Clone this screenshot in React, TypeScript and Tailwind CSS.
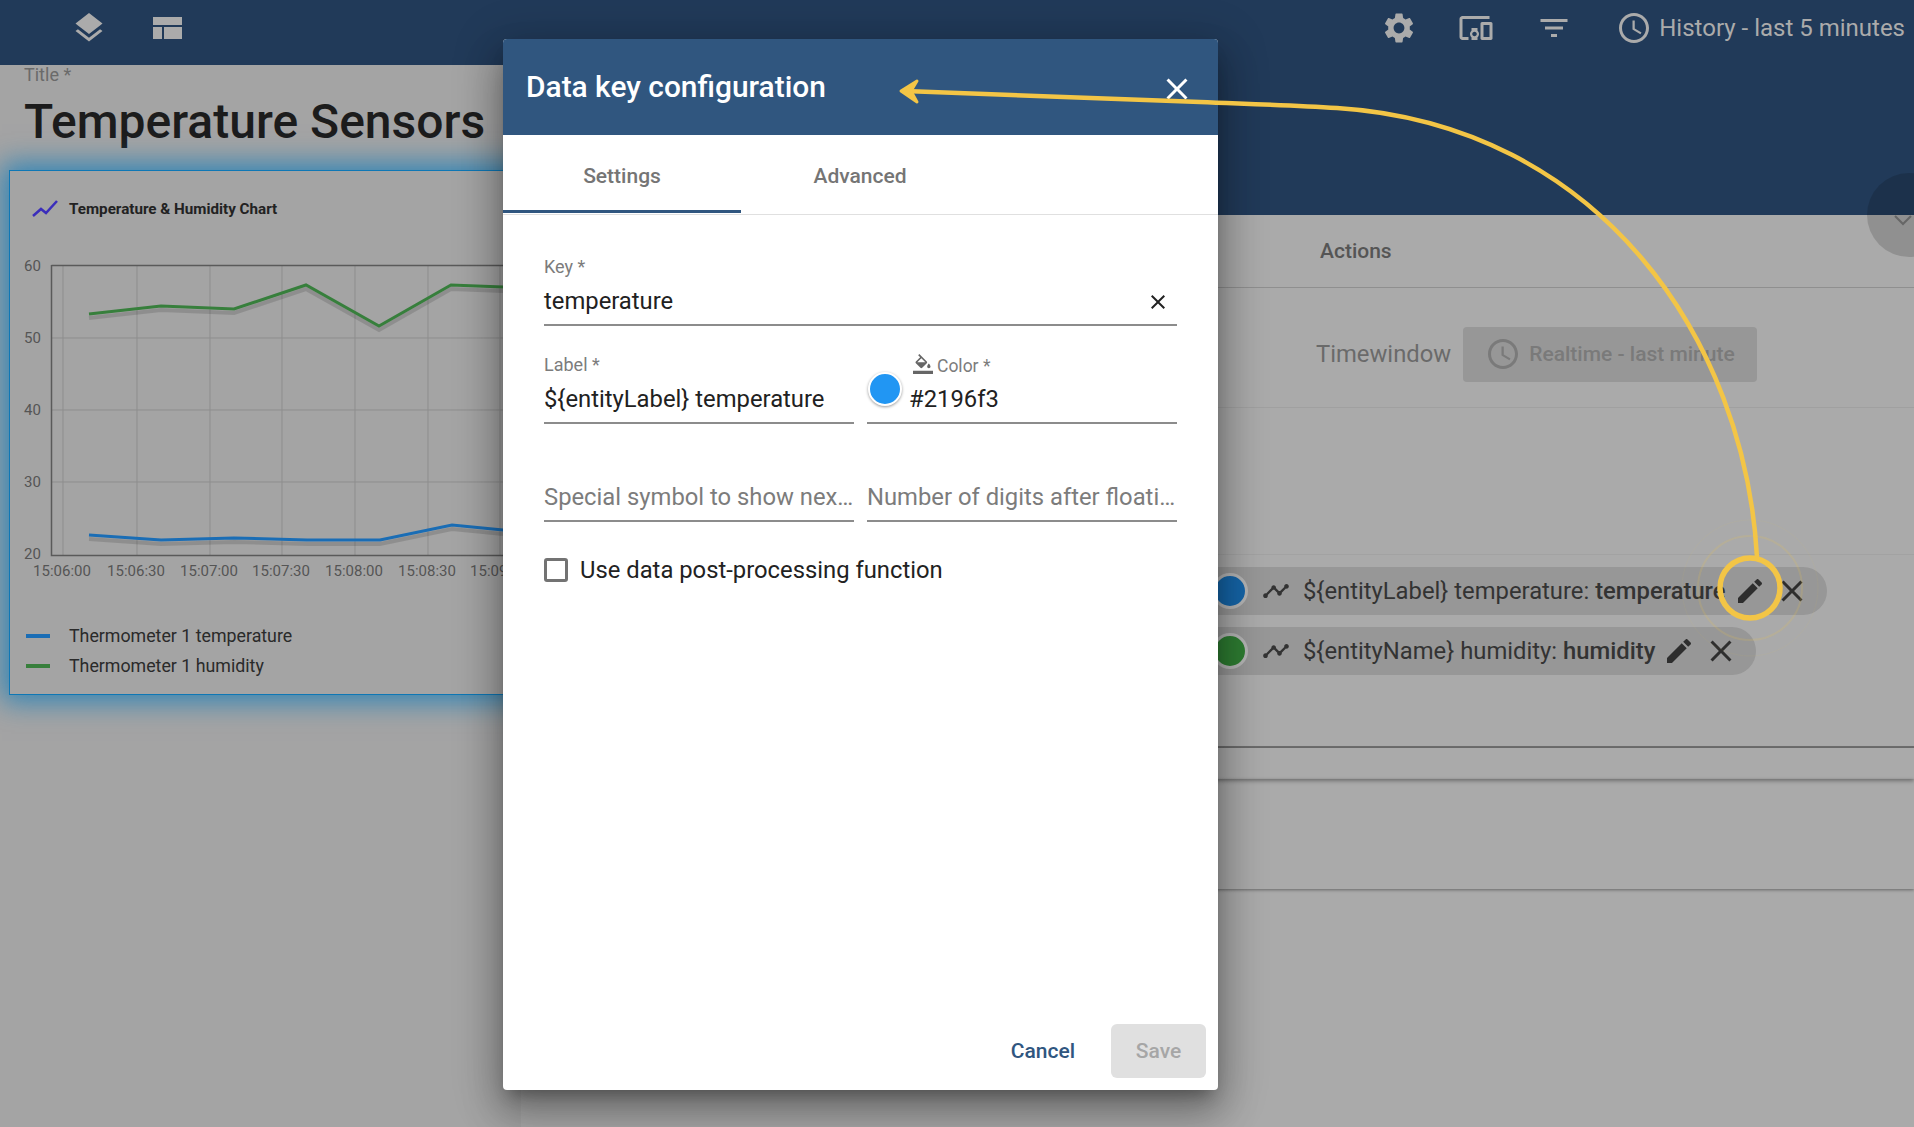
import React from 'react';

const P = {
  layers: 'M11.99 18.54l-7.37-5.73L3 14.07l9 7 9-7-1.63-1.27-7.38 5.74zM12 16l7.36-5.73L21 9l-9-7-9 7 1.63 1.27L12 16z',
  gear: 'M19.14,12.94c0.04-0.3,0.06-0.61,0.06-0.94c0-0.32-0.02-0.64-0.07-0.94l2.03-1.58c0.18-0.14,0.23-0.41,0.12-0.61 l-1.92-3.32c-0.12-0.22-0.37-0.29-0.59-0.22l-2.39,0.96c-0.5-0.38-1.03-0.7-1.62-0.94L14.4,2.81c-0.04-0.24-0.24-0.41-0.48-0.41 h-3.84c-0.24,0-0.43,0.17-0.47,0.41L9.25,5.35C8.66,5.59,8.12,5.92,7.63,6.29L5.24,5.33c-0.22-0.08-0.47,0-0.59,0.22L2.74,8.87 C2.62,9.08,2.66,9.34,2.86,9.48l2.03,1.58C4.84,11.36,4.8,11.69,4.8,12s0.02,0.64,0.07,0.94l-2.03,1.58 c-0.18,0.14-0.23,0.41-0.12,0.61l1.92,3.32c0.12,0.22,0.37,0.29,0.59,0.22l2.39-0.96c0.5,0.38,1.03,0.7,1.62,0.94l0.36,2.54 c0.05,0.24,0.24,0.41,0.48,0.41h3.84c0.24,0,0.44-0.17,0.47-0.41l0.36-2.54c0.59-0.24,1.13-0.56,1.62-0.94l2.39,0.96 c0.22,0.08,0.47,0,0.59-0.22l1.92-3.32c0.12-0.22,0.07-0.47-0.12-0.61L19.14,12.94z M12,15.6c-1.98,0-3.6-1.62-3.6-3.6 s1.62-3.6,3.6-3.6s3.6,1.62,3.6,3.6S13.98,15.6,12,15.6z',
  devices: 'M3 6h18V4H3c-1.1 0-2 .9-2 2v12c0 1.1.9 2 2 2h4v-2H3V6zm10 6H9v1.78c-.61.55-1 1.33-1 2.22s.39 1.67 1 2.22V20h4v-1.78c.61-.55 1-1.34 1-2.22s-.39-1.67-1-2.22V12zm-2 5.5c-.83 0-1.5-.67-1.5-1.5s.67-1.5 1.5-1.5 1.5.67 1.5 1.5-.67 1.5-1.5 1.5zM22 8h-6c-.5 0-1 .5-1 1v10c0 .5.5 1 1 1h6c.5 0 1-.5 1-1V9c0-.5-.5-1-1-1zm-1 10h-4v-8h4v8z',
  filter: 'M10 18h4v-2h-4v2zM3 6v2h18V6H3zm3 7h12v-2H6v2z',
  clock: 'M11.99 2C6.47 2 2 6.48 2 12s4.47 10 9.99 10C17.52 22 22 17.52 22 12S17.52 2 11.99 2zM12 20c-4.42 0-8-3.58-8-8s3.58-8 8-8 8 3.58 8 8-3.58 8-8 8zm.5-13H11v6l5.25 3.15.75-1.23-4.5-2.67z',
  edit: 'M3 17.25V21h3.75L17.81 9.94l-3.75-3.75L3 17.25zM20.71 7.04c.39-.39.39-1.02 0-1.41l-2.34-2.34c-.39-.39-1.02-.39-1.41 0l-1.83 1.83 3.75 3.75 1.83-1.83z',
  close: 'M19 6.41L17.59 5 12 10.59 6.41 5 5 6.41 10.59 12 5 17.59 6.41 19 12 13.41 17.59 19 19 17.59 13.41 12z',
  timeline: 'M23 8c0 1.1-.9 2-2 2-.18 0-.35-.02-.51-.07l-3.56 3.55c.05.16.07.34.07.52 0 1.1-.9 2-2 2s-2-.9-2-2c0-.18.02-.36.07-.52l-2.55-2.55c-.16.05-.34.07-.52.07s-.36-.02-.52-.07l-4.55 4.56c.05.16.07.33.07.51 0 1.1-.9 2-2 2s-2-.9-2-2 .9-2 2-2c.18 0 .35.02.51.07l4.56-4.55C8.02 9.36 8 9.18 8 9c0-1.1.9-2 2-2s2 .9 2 2c0 .18-.02.36-.07.52l2.55 2.55c.16-.05.34-.07.52-.07s.36.02.52.07l3.55-3.56C19.02 8.35 19 8.18 19 8c0-1.1.9-2 2-2s2 .9 2 2z',
  fill: 'M16.56 8.94L7.62 0 6.21 1.41l2.38 2.38-5.15 5.15c-.59.59-.59 1.54 0 2.12l5.5 5.5c.29.29.68.44 1.06.44s.77-.15 1.06-.44l5.5-5.5c.59-.58.59-1.53 0-2.12zM5.21 10L10 5.21 14.79 10H5.21zM19 11.5s-2 2.17-2 3.5c0 1.1.9 2 2 2s2-.9 2-2c0-1.33-2-3.5-2-3.5zM0 20h24v4H0z',
};

function Icon({ d, className }: { d: string; className?: string }) {
  return (
    <svg viewBox="0 0 24 24" fill="currentColor" className={className}>
      <path d={d} />
    </svg>
  );
}

function Chart() {
  const xs = [63, 137, 210, 282, 355, 428, 500];
  const ys = [338, 410, 482];
  const labels = ['15:06:00', '15:06:30', '15:07:00', '15:07:30', '15:08:00', '15:08:30', '15:09:00'];
  const blue = '89,535 161,540 234,538 307,540 380,540 452,525 503,530 560,533';
  const green = '89,314 161,306 234,309 306,285 379,326 451,285 503,287 560,287';
  return (
    <svg width="560" height="350" viewBox="0 250 560 350" className="block absolute -left-[10px] top-[79px]" style={{ fontFamily: 'Roboto' }}>
      {xs.map((x) => (
        <line key={x} x1={x} x2={x} y1={265} y2={555} stroke="#8d8d8d" />
      ))}
      {ys.map((y) => (
        <line key={y} x1={51} x2={560} y1={y} y2={y} stroke="#8d8d8d" />
      ))}
      <path d="M51.5 265.5H560M51.5 265V555.5H560" stroke="#5a5a5a" strokeWidth="1.5" fill="none" />
      <polyline points={green} transform="translate(0 4)" fill="none" stroke="#000" strokeOpacity="0.13" strokeWidth="4" />
      <polyline points={blue} transform="translate(0 4)" fill="none" stroke="#000" strokeOpacity="0.13" strokeWidth="4" />
      <polyline points={green} fill="none" stroke="#377f3c" strokeWidth="3" />
      <polyline points={blue} fill="none" stroke="#1a6db5" strokeWidth="3" />
      {['60', '50', '40', '30', '20'].map((t, i) => (
        <text key={t} x={24} y={271 + i * 72} fontSize="15" fill="#555">
          {t}
        </text>
      ))}
      {labels.map((t, i) => (
        <text key={t} x={xs[i] - 1} y={576} fontSize="15" fill="#555" textAnchor="middle">
          {t}
        </text>
      ))}
    </svg>
  );
}

function LeftColumn() {
  return (
    <div className="w-[521px] shrink-0 overflow-hidden bg-[#a4a4a4] relative">
      <div className="pl-6">
        <div className="text-[18px] leading-[20px] text-[#6a6a6a]">Title *</div>
        <div className="text-[48px] leading-[56px] mt-[9px] font-medium text-[#1c1c1c] whitespace-nowrap">Temperature Sensors</div>
      </div>
      <div className="relative ml-[9px] mt-[20px] w-[640px] h-[525px] border border-[#0e77b5] shadow-[0_0_26px_7px_rgba(2,119,189,0.7)]">
        <div className="flex items-center gap-[11px] pl-[22px] pt-[27px]">
          <svg viewBox="0 0 26 18" className="w-[26px] h-[18px] text-[#3a2dbb]" fill="none" stroke="currentColor" strokeWidth="2.5">
            <path d="M1 16l8-7 5 4L25 1" />
          </svg>
          <span className="text-[15.2px] font-bold text-[#222]">Temperature &amp; Humidity Chart</span>
        </div>
        <Chart />
        <div className="absolute left-[16px] top-[454px] flex flex-col gap-[8px] text-[17.8px] leading-[22px] text-[#2a2a2a]">
          <div className="flex items-center gap-[19px]"><span className="w-6 h-1 bg-[#1a6db5]" />Thermometer 1 temperature</div>
          <div className="flex items-center gap-[19px]"><span className="w-6 h-1 bg-[#377f3c]" />Thermometer 1 humidity</div>
        </div>
      </div>
    </div>
  );
}

function Chip({ color, label, value, width }: { color: string; label: string; value: string; width: string }) {
  return (
    <div className={`${width} h-12 rounded-full bg-[#979797] flex items-center text-[23.8px] text-[#333] whitespace-nowrap pl-[691px]`}>
      <span className={`w-[36px] h-[36px] rounded-full border-[3px] border-[#b5b5b5] shrink-0 ${color}`} />
      <Icon d={P.timeline} className="w-[28px] h-[28px] ml-[14px] shrink-0 text-[#333]" />
      <span className="ml-[13px] mr-[8px] mt-[2px]">{label}: <b className="font-medium">{value}</b></span>
      <Icon d={P.edit} className="w-8 h-8 shrink-0 text-[#2e2e2e]" />
      <Icon d={P.close} className="w-9 h-9 ml-[8px] shrink-0 text-[#2e2e2e]" />
    </div>
  );
}

function RightColumn() {
  return (
    <div className="flex-1 min-w-0 flex flex-col bg-[#aaaaaa] overflow-hidden">
      <div className="h-[150px] bg-[#213a59] shrink-0" />
      <div className="h-[73px] border-b border-[#8f8f8f] flex items-center pl-[799px] pt-[1px] text-[21px] font-medium text-[#555]">Actions</div>
      <div className="h-[120px] border-b border-[#a0a0a0] flex items-center pl-[795px] pt-[13px]">
        <span className="text-[23.8px] text-[#6a6a6a] mt-[2px]">Timewindow</span>
        <div className="ml-[12px] w-[294px] h-[55px] rounded bg-[#979797] flex items-center pl-[22px] text-[21px] font-medium text-[#7a7a7a]">
          <Icon d={P.clock} className="w-9 h-9 text-[#7a7a7a] mr-[8px]" />
          <span className="mt-[2px]">Realtime - last minute</span>
        </div>
      </div>
      <div className="h-[147px] border-b border-[#a2a2a2]" />
      <div className="h-[193px] pt-[12px] flex flex-col gap-[12px] border-b-2 border-[#6e6e6e]">
        <Chip color="bg-[#1565a8]" label="${entityLabel} temperature" value="temperature" width="w-[1306px]" />
        <Chip color="bg-[#2e7d32]" label="${entityName} humidity" value="humidity" width="w-[1235px]" />
      </div>
      <div className="h-[31px] shadow-[0_2px_4px_rgba(0,0,0,0.35)]" />
      <div className="h-[110px] shadow-[0_1px_3px_rgba(0,0,0,0.4)]" />
    </div>
  );
}

function Field({ label, value, placeholder, className }: { label?: string; value?: string; placeholder?: string; className?: string }) {
  return (
    <div className={`border-b-2 border-[#8c8c8c] h-[60px] flex flex-col justify-end pb-[7px] min-w-0 ${className ?? ''}`}>
      {label && <div className="text-[18px] leading-[20px] mb-[8px] text-[#7c7c7c]">{label}</div>}
      {value && <div className="text-[23.8px] leading-[32px] text-[#212121] whitespace-nowrap">{value}</div>}
      {placeholder && <div className="text-[23.8px] leading-[32px] text-[#7c7c7c] truncate">{placeholder}</div>}
    </div>
  );
}

function Dialog() {
  return (
    <div className="absolute left-[503px] top-[39px] w-[715px] h-[1051px] bg-white rounded flex flex-col overflow-hidden shadow-[0_11px_15px_-7px_rgba(0,0,0,0.3),0_24px_38px_3px_rgba(0,0,0,0.22),0_9px_46px_8px_rgba(0,0,0,0.2)]">
      <div className="h-[96px] shrink-0 bg-[#30567f] flex items-center justify-between pl-[23px] pr-[30px] text-white">
        <span className="text-[29.9px] font-medium">Data key configuration</span>
        <Icon d={P.close} className="w-[36px] h-[36px] mt-[3px] -mr-[7px]" />
      </div>
      <div className="flex h-[80px] shrink-0 border-b border-[#e0e0e0] text-[21px] font-medium text-[#757575]">
        <div className="w-[238px] h-[78px] pt-[9px] flex items-center justify-center border-b-[3px] border-[#30567f]">Settings</div>
        <div className="w-[238px] h-[78px] pt-[9px] flex items-center justify-center border-b-[3px] border-transparent">Advanced</div>
      </div>
      <div className="flex-1 px-[41px] pt-[22px]">
        <div className="relative">
          <Field label="Key *" value="temperature" className="h-[89px]" />
          <Icon d={P.close} className="absolute right-[7px] top-[53px] w-6 h-6 text-[#222]" />
        </div>
        <div className="flex gap-[13px] mt-[15px]">
          <Field label="Label *" value="${entityLabel} temperature" className="flex-1 basis-0 h-[83px]" />
          <div className="flex-1 basis-0 relative">
            <Field value="#2196f3" className="h-[83px] pl-[42px]" />
            <div className="absolute left-[46px] top-[15px] flex items-center text-[17.5px] leading-[20px] text-[#7c7c7c]">
              <Icon d={P.fill} className="w-5 h-5 mr-[4px] -mt-[4px] text-[#666]" />Color *
            </div>
            <span className="absolute left-[1px] top-[31px] w-[34px] h-[34px] rounded-full bg-[#2196f3] border-2 border-white shadow-[0_1px_3px_rgba(0,0,0,0.4)]" />
          </div>
        </div>
        <div className="flex gap-[13px] mt-[38px]">
          <Field placeholder="Special symbol to show next to value" className="flex-1 basis-0" />
          <Field placeholder="Number of digits after floating point" className="flex-1 basis-0" />
        </div>
        <div className="flex items-center gap-3 mt-[34px] text-[23.8px] leading-[28px] text-[#222]">
          <span className="w-6 h-6 rounded-[3px] border-[3px] border-[#737373]" />
          Use data post-processing function
        </div>
      </div>
      <div className="h-[66px] shrink-0 flex items-start justify-end pr-[12px] text-[21px] font-medium">
        <span className="text-[#30567f] mt-[12px] mr-[36px]">Cancel</span>
        <div className="w-[95px] h-[54px] pt-[1px] rounded-md bg-[#e0e0e0] text-[#a6a6a6] flex items-center justify-center">Save</div>
      </div>
    </div>
  );
}

function Annotation() {
  return (
    <svg width="1914" height="1127" viewBox="0 0 1914 1127" className="absolute left-0 top-0 pointer-events-none" fill="none" stroke="#f3c546">
      <path d="M905 91L1200 102C1250 104 1290 105 1337 108C1600 125 1745 340 1757 557" strokeWidth="4.5" />
      <path d="M917 81L901 91L917 102L911 91Z" fill="#f3c546" strokeWidth="3" strokeLinejoin="round" />
      <circle cx="1750" cy="588" r="30" strokeWidth="5.5" />
      <circle cx="1750" cy="588" r="52" strokeWidth="2" strokeOpacity="0.16" />
      <circle cx="1750" cy="588" r="68" strokeWidth="1" strokeOpacity="0.06" />
    </svg>
  );
}

export default function App() {
  return (
    <div className="relative w-[1914px] h-[1127px] overflow-hidden flex flex-col bg-[#aaaaaa]" style={{ fontFamily: 'Roboto, sans-serif' }}>
      <header className="h-[65px] shrink-0 bg-[#213a59] flex items-center pl-[71px] pr-[9px] pb-[9px] text-[#ababab]">
        <Icon d={P.layers} className="w-9 h-9" />
        <svg viewBox="0 0 29 22" className="w-[29px] h-[22px] ml-[46px]" fill="currentColor">
          <path d="M0 0h29v8H0zM0 10h9v12H0zM11 10h18v12H11z" />
        </svg>
        <div className="flex-1" />
        <Icon d={P.gear} className="w-9 h-9" />
        <Icon d={P.devices} className="w-9 h-9 ml-[41px]" />
        <Icon d={P.filter} className="w-9 h-9 ml-[42px]" />
        <Icon d={P.clock} className="w-9 h-9 ml-[44px]" />
        <span className="text-[24px] ml-[7px] whitespace-nowrap">History - last 5 minutes</span>
      </header>
      <div className="flex-1 flex min-h-0">
        <LeftColumn />
        <RightColumn />
      </div>
      <div className="absolute left-[1867px] top-[173px] w-[84px] h-[84px] rounded-full bg-black/15 flex items-center pl-[24px] pt-[10px] text-[#666]">
        <svg viewBox="0 0 24 24" className="w-6 h-6" fill="none" stroke="currentColor" strokeWidth="2"><path d="M4 8l8 8 8-8" /></svg>
      </div>
      <Dialog />
      <Annotation />
    </div>
  );
}
